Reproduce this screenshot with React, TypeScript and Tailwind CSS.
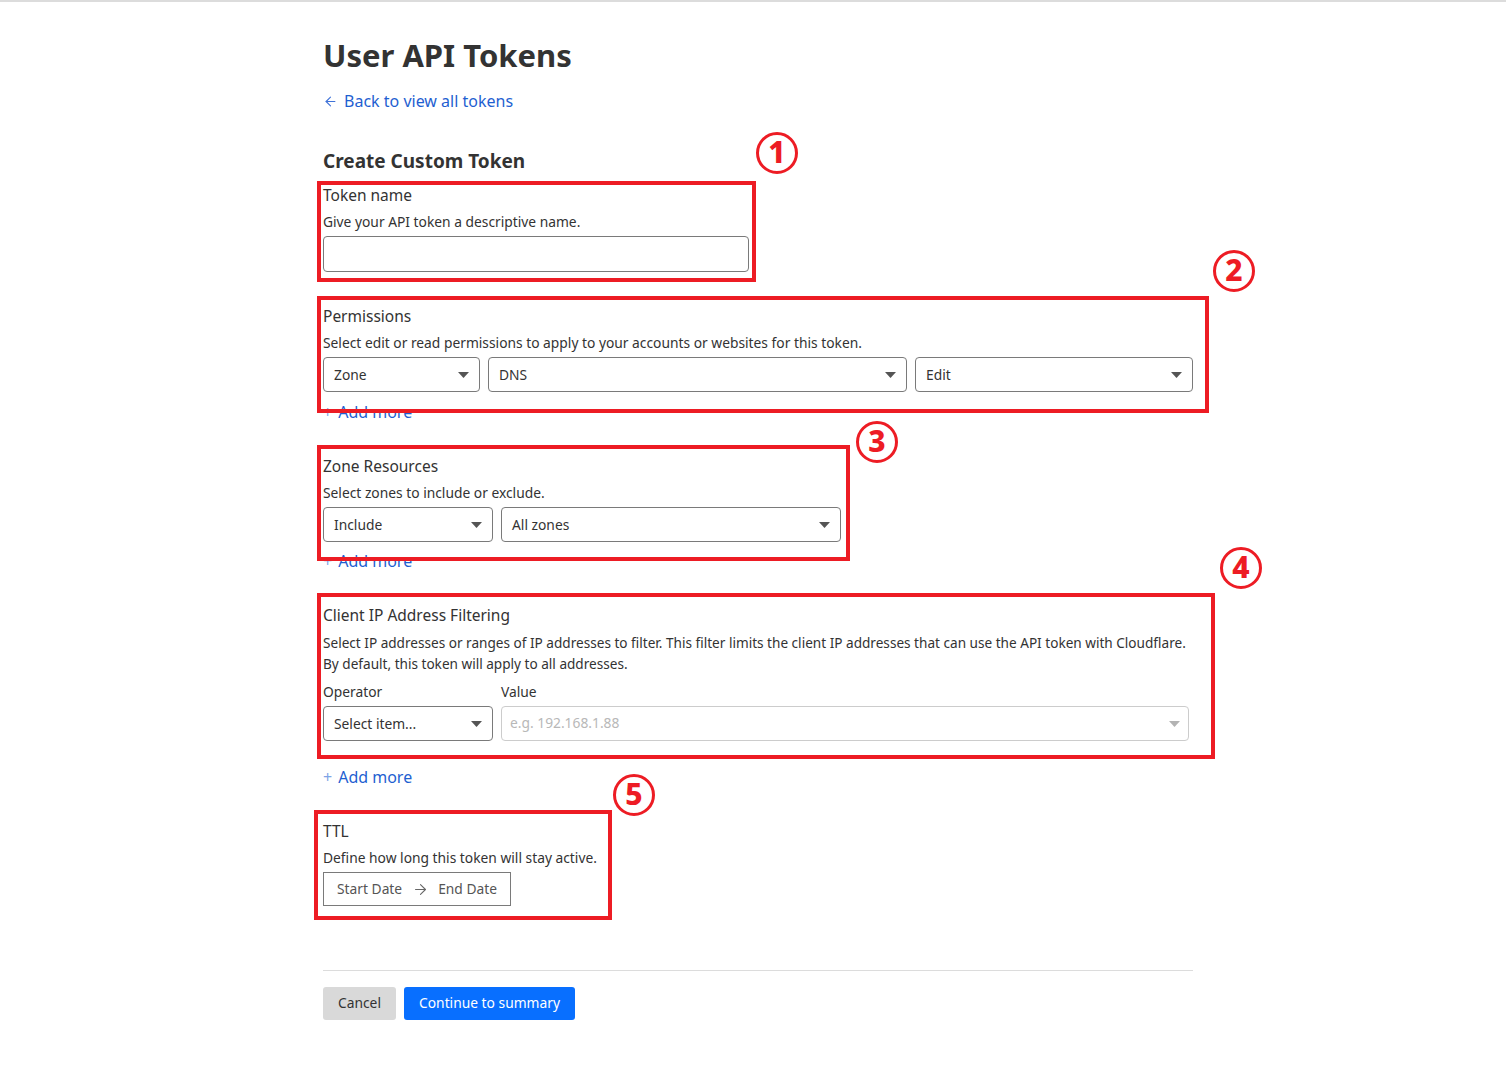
import { ArrowLeft, ArrowRight } from 'lucide-react';

const font = { fontFamily: '"Noto Sans", "Noto Sans CJK KR", sans-serif' };

function Caret({ muted }: { muted?: boolean }) {
  return (
    <svg width="11" height="6" viewBox="0 0 11 6" className="shrink-0">
      <path d="M0 0h11L5.5 6z" fill={muted ? '#b3b3b3' : '#555'} />
    </svg>
  );
}

function Select({ value, className }: { value: string; className: string }) {
  return (
    <div
      className={`h-[35px] flex items-center justify-between pl-[10px] pr-[10px] border border-[#7a7a7a] rounded-[4px] text-[13.8px] text-[#333] ${className}`}
    >
      <span className="pt-[2px]">{value}</span>
      <Caret />
    </div>
  );
}

function Num({ n, className }: { n: string; className: string }) {
  return (
    <div
      className={`absolute w-[42px] h-[42px] rounded-full border-[3px] border-[#ed1c24] flex items-center justify-center text-[#ed1c24] text-[30px] font-extrabold leading-none z-10 ${className}`}
    >
      <span className="-mt-[2px]">{n}</span>
    </div>
  );
}

function AddMore({ className = '' }: { className?: string }) {
  return (
    <div className={`h-[24px] flex items-center text-[16px] text-[#1f5fd1] ${className}`}>
      <span className="text-[#7ea3e6] mr-[6px]">+</span>Add more
    </div>
  );
}

export default function App() {
  return (
    <div className="min-h-screen bg-white border-t-2 border-[#dcdcdc]" style={font}>
      <div className="ml-[323px] w-[870px] pt-[33px] pb-[40px] text-[#333]">
        <h1 className="text-[31px] leading-[40px] font-bold text-[#333]">User API Tokens</h1>

        <a className="mt-[14px] h-[24px] flex items-center gap-[6px] text-[16px] text-[#1f5fd1]">
          <ArrowLeft className="w-[15px] h-[15px] text-[#3f72d8]" strokeWidth={1.75} />
          Back to view all tokens
        </a>

        <h2 className="mt-[34px] text-[19px] leading-[28px] font-bold text-[#333]">Create Custom Token</h2>

        {/* 1 - token name */}
        <section className="relative mt-[8px]">
          <div className="text-[15.5px] leading-[24px]">Token name</div>
          <div className="mt-[5px] text-[13.8px] leading-[20px]">Give your API token a descriptive name.</div>
          <input className="mt-[4px] block w-[426px] h-[36px] border border-[#7a7a7a] rounded-[4px] outline-none" />
          <div className="absolute -top-[2px] -left-[6px] w-[439px] h-[101px] border-4 border-[#ed1c24] z-10" />
          <Num n="1" className="-top-[51px] left-[433px]" />
        </section>

        {/* 2 - permissions */}
        <section className="relative mt-[32px]">
          <div className="text-[15.5px] leading-[24px]">Permissions</div>
          <div className="mt-[5px] text-[13.8px] leading-[20px]">
            Select edit or read permissions to apply to your accounts or websites for this token.
          </div>
          <div className="mt-[4px] flex gap-[8px]">
            <Select value="Zone" className="w-[157px]" />
            <Select value="DNS" className="w-[419px]" />
            <Select value="Edit" className="w-[278px]" />
          </div>
          <AddMore className="mt-[8px]" />
          <div className="absolute -top-[8px] -left-[6px] w-[892px] h-[117px] border-4 border-[#ed1c24] z-10" />
          <Num n="2" className="-top-[54px] left-[890px]" />
        </section>

        {/* 3 - zone resources */}
        <section className="relative mt-[30px]">
          <div className="text-[15.5px] leading-[24px]">Zone Resources</div>
          <div className="mt-[5px] text-[13.8px] leading-[20px]">Select zones to include or exclude.</div>
          <div className="mt-[4px] flex gap-[8px]">
            <Select value="Include" className="w-[170px]" />
            <Select value="All zones" className="w-[340px]" />
          </div>
          <AddMore className="mt-[7px]" />
          <div className="absolute -top-[9px] -left-[6px] w-[533px] h-[116px] border-4 border-[#ed1c24] z-10" />
          <Num n="3" className="-top-[33px] left-[533px]" />
        </section>

        {/* 4 - client ip filtering */}
        <section className="relative mt-[30px]">
          <div className="text-[15.5px] leading-[24px]">Client IP Address Filtering</div>
          <div className="mt-[5px] text-[13.6px] leading-[21px] whitespace-nowrap">
            Select IP addresses or ranges of IP addresses to filter. This filter limits the client IP addresses that can use the API token with Cloudflare.
            <br />
            By default, this token will apply to all addresses.
          </div>
          <div className="mt-[8px] flex gap-[8px]">
            <div className="w-[170px]">
              <div className="text-[13.8px] leading-[20px]">Operator</div>
              <Select value="Select item..." className="mt-[4px]" />
            </div>
            <div className="w-[688px]">
              <div className="text-[13.8px] leading-[20px]">Value</div>
              <div className="mt-[4px] h-[35px] flex items-center justify-between px-[8px] border border-[#cccccc] rounded-[4px] text-[13.8px] text-[#b8b8b8]">
                <span>e.g. 192.168.1.88</span>
                <Caret muted />
              </div>
            </div>
          </div>
          <div className="absolute -top-[10px] -left-[6px] w-[898px] h-[166px] border-4 border-[#ed1c24] z-10" />
          <Num n="4" className="-top-[56px] left-[897px]" />
        </section>

        <AddMore className="mt-[24px]" />

        {/* 5 - ttl */}
        <section className="relative mt-[30px]">
          <div className="text-[15.5px] leading-[24px]">TTL</div>
          <div className="mt-[5px] text-[13.8px] leading-[20px]">Define how long this token will stay active.</div>
          <div className="mt-[4px] w-[188px] h-[34px] flex items-center justify-between px-[13px] border border-[#7a7a7a] text-[13.8px] text-[#555] whitespace-nowrap">
            <span>Start Date</span>
            <ArrowRight className="w-[17px] h-[17px] text-[#666]" strokeWidth={1.5} />
            <span>End Date</span>
          </div>
          <div className="absolute -top-[9px] -left-[9px] w-[298px] h-[110px] border-4 border-[#ed1c24] z-10" />
          <Num n="5" className="-top-[45px] left-[290px]" />
        </section>

        <div className="mt-[64px] h-px bg-[#dcdcdc]" />

        <div className="mt-[16px] flex gap-[8px]">
          <button className="h-[33px] w-[73px] rounded-[3px] bg-[#d9d9d9] text-[13.8px] text-[#333]">Cancel</button>
          <button className="h-[33px] w-[171px] rounded-[3px] bg-[#086fff] text-[13.8px] text-white">Continue to summary</button>
        </div>
      </div>
    </div>
  );
}
